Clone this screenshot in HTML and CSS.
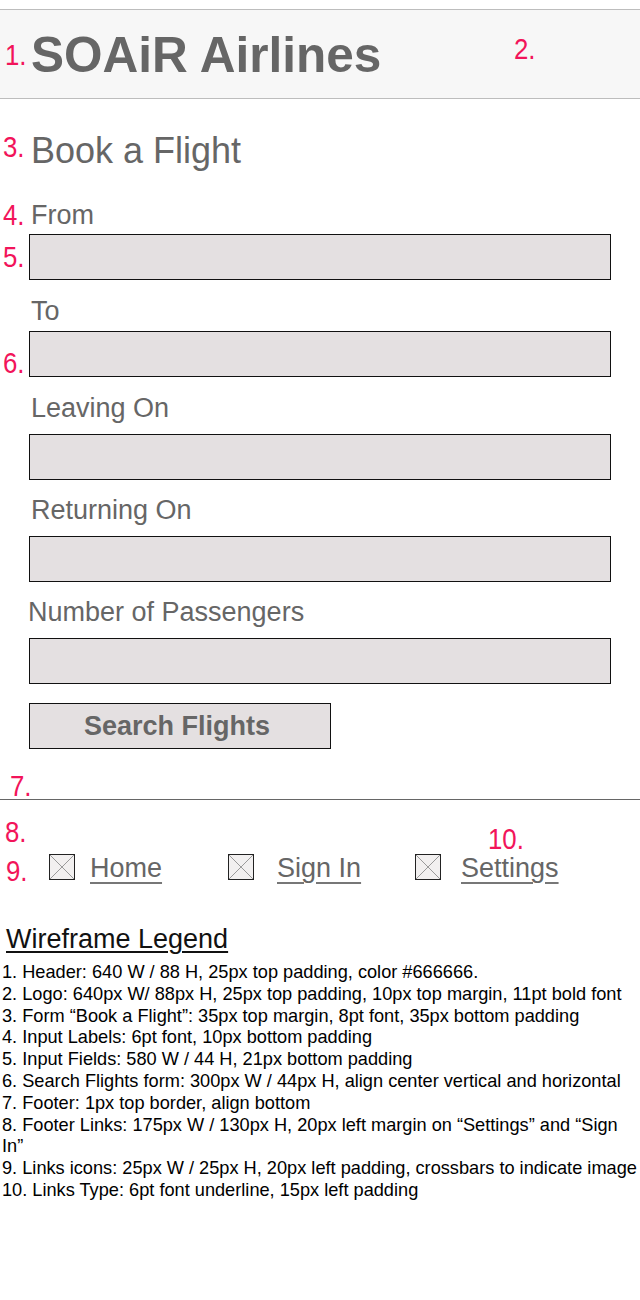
FILE: index.html
```html
<!DOCTYPE html>
<html lang="en">
<head>
<meta charset="utf-8">
<title>SOAiR Airlines – Book a Flight</title>
<link rel="stylesheet" href="styles.css">
</head>
<body>
<div class="page">
  <header class="site-header">
    <h1 class="logo">SOAiR Airlines</h1>
  </header>

  <main class="booking">
    <h2 class="booking-title">Book a Flight</h2>
    <form class="booking-form">
      <label class="field-label field-label--first">From</label>
      <div class="field-input field-input--wide-gap"></div>
      <label class="field-label field-label--tight">To</label>
      <div class="field-input field-input--wide-gap"></div>
      <label class="field-label">Leaving On</label>
      <div class="field-input"></div>
      <label class="field-label">Returning On</label>
      <div class="field-input"></div>
      <label class="field-label field-label--shift">Number of Passengers</label>
      <div class="field-input"></div>
      <div class="search-button">Search Flights</div>
    </form>
  </main>

  <footer class="site-footer">
    <nav class="footer-links">
      <a class="footer-link footer-link--home">
        <svg class="link-icon" width="26" height="26" viewBox="0 0 26 26"><rect x="0.5" y="0.5" width="25" height="25" fill="#f2f0f0" stroke="#222"/><path d="M1 1 L25 25 M25 1 L1 25" stroke="#9a9a9a" stroke-width="1"/></svg>
        <span class="link-text">Home</span>
      </a>
      <a class="footer-link footer-link--signin">
        <svg class="link-icon" width="26" height="26" viewBox="0 0 26 26"><rect x="0.5" y="0.5" width="25" height="25" fill="#f2f0f0" stroke="#222"/><path d="M1 1 L25 25 M25 1 L1 25" stroke="#9a9a9a" stroke-width="1"/></svg>
        <span class="link-text">Sign In</span>
      </a>
      <a class="footer-link footer-link--settings">
        <svg class="link-icon" width="26" height="26" viewBox="0 0 26 26"><rect x="0.5" y="0.5" width="25" height="25" fill="#f2f0f0" stroke="#222"/><path d="M1 1 L25 25 M25 1 L1 25" stroke="#9a9a9a" stroke-width="1"/></svg>
        <span class="link-text">Settings</span>
      </a>
    </nav>
  </footer>

  <section class="legend">
    <h3 class="legend-title">Wireframe Legend</h3>
    <ol class="legend-list">
      <li>1. Header: 640 W / 88 H, 25px top padding, color #666666.</li>
      <li>2. Logo: 640px W/ 88px H, 25px top padding, 10px top margin, 11pt bold font</li>
      <li>3. Form “Book a Flight”: 35px top margin, 8pt font, 35px bottom padding</li>
      <li>4. Input Labels: 6pt font, 10px bottom padding</li>
      <li>5. Input Fields: 580 W / 44 H, 21px bottom padding</li>
      <li>6. Search Flights form: 300px W / 44px H, align center vertical and horizontal</li>
      <li>7. Footer: 1px top border, align bottom</li>
      <li>8. Footer Links: 175px W / 130px H, 20px left margin on “Settings” and “Sign In”</li>
      <li>9. Links icons: 25px W / 25px H, 20px left padding, crossbars to indicate image</li>
      <li>10. Links Type: 6pt font underline, 15px left padding</li>
    </ol>
  </section>

  <span class="marker marker--1">1.</span>
  <span class="marker marker--2">2.</span>
  <span class="marker marker--3">3.</span>
  <span class="marker marker--4">4.</span>
  <span class="marker marker--5">5.</span>
  <span class="marker marker--6">6.</span>
  <span class="marker marker--7">7.</span>
  <span class="marker marker--8">8.</span>
  <span class="marker marker--9">9.</span>
  <span class="marker marker--10">10.</span>
</div>
</body>
</html>
```

FILE: styles.css
```css
* { box-sizing: border-box; }

html, body {
  margin: 0;
  padding: 0;
  background: #ffffff;
}

body {
  font-family: "Liberation Sans", Arial, sans-serif;
  color: #666666;
}

.page {
  position: relative;
  width: 640px;
  min-height: 1300px;
}

/* Header */
.site-header {
  margin-top: 9px;
  height: 90px;
  border-top: 1px solid #bdbdbd;
  border-bottom: 1px solid #bdbdbd;
  background: #f7f7f7;
  padding: 20px 0 0 31px;
}

.logo {
  margin: 0;
  font-size: 49.5px;
  line-height: 49px;
  font-weight: bold;
  color: #666666;
}

/* Booking form */
.booking {
  padding: 34px 29px 50px 29px;
}

.booking-title {
  margin: 0 0 32px 2px;
  font-size: 36px;
  line-height: 36px;
  font-weight: normal;
  color: #666666;
}

.booking-form {
  display: flex;
  flex-direction: column;
  align-items: flex-start;
}

.field-label {
  display: block;
  margin-left: 2px;
  font-size: 27px;
  line-height: 28px;
  color: #666666;
  margin-bottom: 12px;
}

.field-label--first { margin-bottom: 5px; }
.field-label--tight { margin-bottom: 6px; }
.field-label--shift { margin-left: -1px; }

.field-input {
  width: 582px;
  height: 46px;
  border: 1px solid #111111;
  background: #e4e0e1;
  margin-bottom: 16px;
}

.field-input--wide-gap { margin-bottom: 17px; }

.search-button {
  margin-top: 3px;
  width: 302px;
  height: 46px;
  border: 1px solid #111111;
  background: #e4e0e1;
  display: flex;
  align-items: center;
  justify-content: center;
  padding-right: 6px;
  font-size: 27px;
  font-weight: bold;
  color: #666666;
}

/* Footer */
.site-footer {
  border-top: 1px solid #666666;
  padding: 54px 0 0 49px;
}

.footer-links {
  display: grid;
  grid-template-columns: 179px 187px auto;
  align-items: start;
}

.footer-link {
  display: flex;
  align-items: flex-start;
  color: #666666;
  text-decoration: none;
}

.link-icon {
  display: block;
  flex: none;
}

.link-text {
  font-size: 27px;
  line-height: 29px;
  color: #666666;
  text-decoration: underline;
  text-decoration-thickness: 2px;
  text-underline-offset: 5px;
  text-decoration-color: #777777;
}

.footer-link--home .link-text { margin-left: 15px; }
.footer-link--signin .link-text { margin-left: 23px; }
.footer-link--settings .link-text { margin-left: 20px; }

/* Legend */
.legend {
  padding: 42px 0 0 0;
}

.legend-title {
  margin: 0 0 8px 6px;
  font-size: 27px;
  line-height: 29px;
  font-weight: normal;
  color: #111111;
  display: inline-block;
  text-decoration: underline;
  text-decoration-thickness: 2px;
  text-underline-offset: 3px;
}

.legend-list {
  list-style: none;
  margin: 0;
  padding: 0 2px 0 2px;
  font-size: 18.2px;
  line-height: 21.8px;
  color: #000000;
}

/* Annotation markers */
.marker {
  position: absolute;
  font-family: "Liberation Sans", sans-serif;
  font-size: 30px;
  line-height: 30px;
  color: #f2145a;
  transform: scaleX(0.86);
  transform-origin: left top;
}

.marker--1 { left: 5px; top: 31px; }
.marker--2 { left: 514px; top: 25px; }
.marker--3 { left: 3px; top: 123px; }
.marker--4 { left: 3px; top: 191px; }
.marker--5 { left: 3px; top: 233px; }
.marker--6 { left: 3px; top: 339px; }
.marker--7 { left: 10px; top: 762px; }
.marker--8 { left: 5px; top: 808px; }
.marker--9 { left: 6px; top: 847px; }
.marker--10 { left: 488px; top: 815px; }
```
